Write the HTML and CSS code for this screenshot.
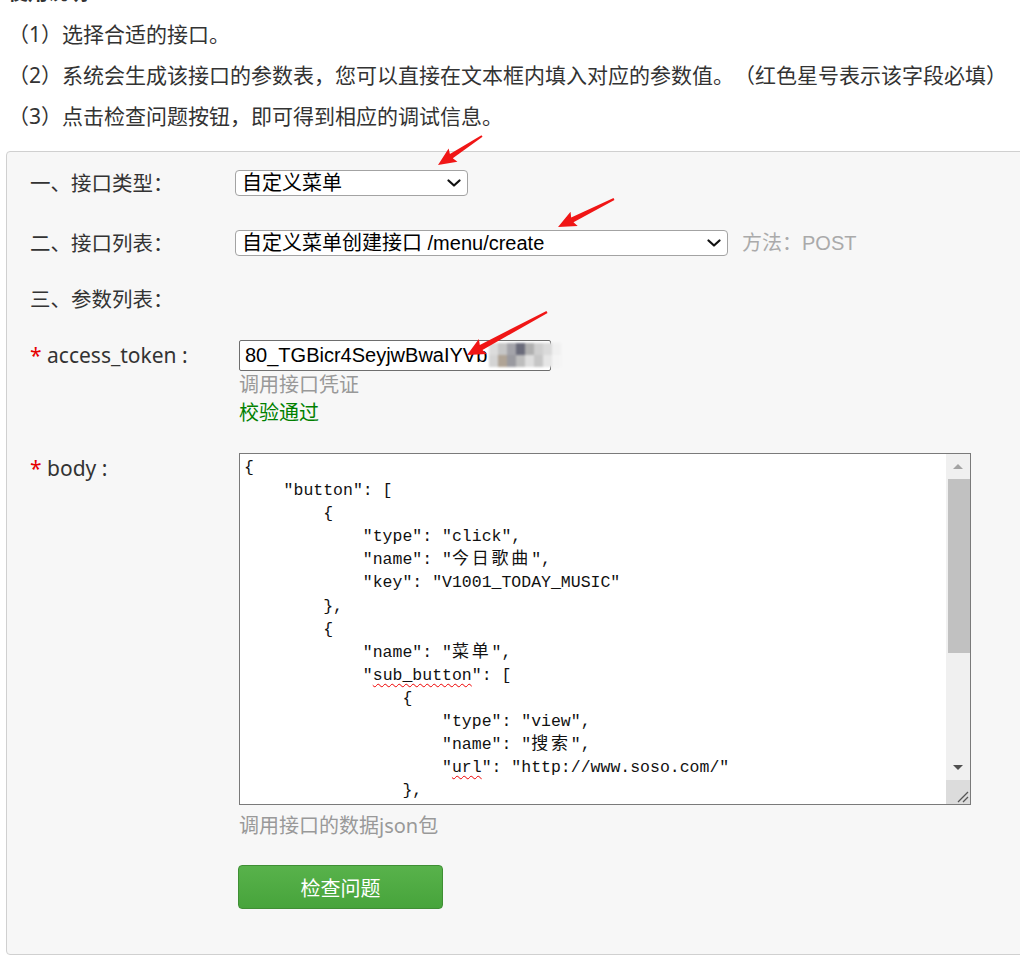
FILE: index.html
```html
<!DOCTYPE html>
<html lang="zh-CN">
<head>
<meta charset="utf-8">
<title>接口调试</title>
<link rel="stylesheet" href="styles.css">
</head>
<body>
<div class="page">
  <div class="intro">
    <h3 class="intro-title">使用说明</h3>
    <ol class="steps">
      <li>（1）选择合适的接口。</li>
      <li>（2）系统会生成该接口的参数表，您可以直接在文本框内填入对应的参数值。（红色星号表示该字段必填）</li>
      <li>（3）点击检查问题按钮，即可得到相应的调试信息。</li>
    </ol>
  </div>

  <div class="panel">
    <div class="row row-type">
      <div class="label">一、接口类型：</div>
      <div class="field">
        <div class="select select-type">
          <span>自定义菜单</span>
          <svg class="chev" width="14" height="8" viewBox="0 0 14 8"><path d="M1.5 1.5 L7 6.5 L12.5 1.5" fill="none" stroke="#111" stroke-width="2.2" stroke-linecap="round" stroke-linejoin="round"/></svg>
        </div>
      </div>
    </div>

    <div class="row row-list">
      <div class="label">二、接口列表：</div>
      <div class="field field-inline">
        <div class="select select-list">
          <span>自定义菜单创建接口 /menu/create</span>
          <svg class="chev" width="14" height="8" viewBox="0 0 14 8"><path d="M1.5 1.5 L7 6.5 L12.5 1.5" fill="none" stroke="#111" stroke-width="2.2" stroke-linecap="round" stroke-linejoin="round"/></svg>
        </div>
        <span class="method">方法：POST</span>
      </div>
    </div>

    <div class="row row-params">
      <div class="label">三、参数列表：</div>
      <div class="field"></div>
    </div>

    <div class="row row-token">
      <div class="label label-latin"><span class="req">*</span> access_token :</div>
      <div class="field">
        <div class="token-wrap">
          <input class="token-input" type="text" value="80_TGBicr4SeyjwBwaIYVb">
          <span class="mosaic" aria-hidden="true">
            <i class="m1"></i><i class="m2"></i><i class="m3"></i><i class="m4"></i><i class="m5"></i><i class="m6"></i><i class="m7"></i><i class="m8"></i>
            <i class="m9"></i><i class="m10"></i><i class="m11"></i><i class="m12"></i><i class="m13"></i><i class="m14"></i><i class="m15"></i><i class="m16"></i>
          </span>
        </div>
        <div class="hint">调用接口凭证</div>
        <div class="hint ok">校验通过</div>
      </div>
    </div>

    <div class="row row-body">
      <div class="label label-latin"><span class="req">*</span> body :</div>
      <div class="field">
        <div class="code-box">
<pre class="code">{
    "button": [
        {
            "type": "click",
            "name": "<span class="cjk">今日歌曲</span>",
            "key": "V1001_TODAY_MUSIC"
        },
        {
            "name": "<span class="cjk">菜单</span>",
            "<span class="spell">sub_button</span>": [
                {
                    "type": "view",
                    "name": "<span class="cjk">搜索</span>",
                    "<span class="spell">url</span>": "http://www.soso.com/"
                },</pre>
          <div class="scrollbar">
            <div class="sb-btn"><span class="tri-up"></span></div>
            <div class="sb-track"><div class="sb-thumb"></div></div>
            <div class="sb-btn"><span class="tri-down"></span></div>
            <div class="sb-corner">
              <svg width="24" height="24" viewBox="0 0 24 24"><path d="M12 22 L22 12 M17 22 L22 17" stroke="#555" stroke-width="1.3" fill="none"/></svg>
            </div>
          </div>
        </div>
        <div class="hint hint-body">调用接口的数据json包</div>
        <button class="check-btn" type="button">检查问题</button>
      </div>
    </div>
  </div>
</div>

<svg class="arrows" width="1020" height="975" viewBox="0 0 1020 975" aria-hidden="true">
  <g fill="#f01616">
    <polygon transform="translate(482 136) rotate(146.6)" points="0,-1 36.7,-2.6 34.7,-8 52.7,0 34.7,8 36.7,2.6 0,1"/>
    <polygon transform="translate(614 199) rotate(153.4)" points="0,-1 46.6,-2.6 44.6,-8 62.6,0 44.6,8 46.6,2.6 0,1"/>
    <polygon transform="translate(547 312) rotate(151.7)" points="0,-1.2 74.8,-2.8 72.8,-8.5 90.8,0 72.8,8.5 74.8,2.8 0,1.2"/>
  </g>
</svg>
</body>
</html>
```

FILE: styles.css
```css
* {
  box-sizing: border-box;
}

html,
body {
  margin: 0;
  padding: 0;
  overflow: hidden;
  background: #fff;
}

body {
  font-family: "Noto Sans", "Noto Sans CJK SC", sans-serif;
  font-size: 20px;
  color: #333;
  text-spacing-trim: space-all;
}

.page {
  display: flow-root;
}

.intro {
  padding: 0 8px;
}

.intro-title {
  margin: -21px 0 0;
  font-size: 20px;
  line-height: 28px;
  font-weight: bold;
  color: #333;
}

.steps {
  list-style: none;
  margin: 7px 0 0;
  padding: 0;
}

.steps li {
  font-size: 21px;
  line-height: 41px;
  white-space: nowrap;
}

.panel {
  margin: 14px 0 0 6px;
  width: 1040px;
  border: 1px solid #d0d0d0;
  border-radius: 4px;
  background: #f7f7f7;
  padding: 18px 0 45px 23px;
}

.row {
  display: grid;
  grid-template-columns: 205px 1fr;
}

.row-list {
  margin-top: 34px;
}

.row-params {
  margin-top: 30px;
}

.row-token {
  margin-top: 28px;
}

.row-body {
  margin-top: 26px;
}

.label {
  font-size: 20.5px;
  line-height: 26px;
  color: #333;
  white-space: nowrap;
}

.label-latin {
  font-size: 21px;
}

.row-token .label {
  line-height: 31px;
}

.row-body .label {
  line-height: 30px;
}

.req {
  color: #e60000;
}

.select {
  display: flex;
  align-items: center;
  justify-content: space-between;
  height: 26px;
  border: 1px solid #a3a3a3;
  border-radius: 4px;
  background: #fff;
  padding: 0 6px 0 6px;
  font-family: "Liberation Sans", "Noto Sans CJK SC", sans-serif;
  font-size: 20px;
  line-height: 24px;
  color: #000;
  white-space: nowrap;
}

.select-type {
  width: 233px;
}

.select-list {
  width: 493px;
}

.chev {
  flex: none;
}

.field-inline {
  display: flex;
  align-items: center;
  gap: 14px;
  height: 26px;
}

.method {
  font-family: "Liberation Sans", "Noto Sans CJK SC", sans-serif;
  line-height: 26px;
  color: #aaa;
  white-space: nowrap;
}

.token-wrap {
  position: relative;
  margin-left: 4px;
  width: 312px;
  height: 31px;
}

.token-input {
  display: block;
  width: 312px;
  height: 31px;
  margin: 0;
  border: 1px solid #6e6e6e;
  border-radius: 2px;
  padding: 0 5px;
  font-family: "Liberation Sans", sans-serif;
  font-size: 20px;
  color: #000;
  background: #fff;
}

.mosaic {
  position: absolute;
  left: 250px;
  top: 3px;
  display: grid;
  grid-template-columns: repeat(8, 9px);
  grid-auto-rows: 12px;
  filter: blur(1.2px);
}

.mosaic i {
  display: block;
}

.m1 { background: #dcdcdc; }
.m2 { background: #c6c6c6; }
.m3 { background: #a4a4aa; }
.m4 { background: #6a6b7a; }
.m5 { background: #b0b0b0; }
.m6 { background: #cfcfcf; }
.m7 { background: #dadada; }
.m8 { background: #f0f0f0; }
.m9 { background: #d4d4d4; }
.m10 { background: #b0a496; }
.m11 { background: #9a9aa0; }
.m12 { background: #bdbdbd; }
.m13 { background: #dedede; }
.m14 { background: #c6c6c6; }
.m15 { background: #e6e6e6; }
.m16 { background: #f4f4f4; }

.hint {
  margin-left: 4px;
  line-height: 28px;
  color: #999;
  white-space: nowrap;
}

.hint.ok {
  color: #008000;
}

.hint-body {
  margin-top: 7px;
}

.code-box {
  display: flex;
  margin-left: 4px;
  width: 732px;
  height: 352px;
  border: 1px solid #7a7a7a;
  background: #fff;
}

.code {
  flex: 1;
  margin: 0;
  padding: 2px 4px;
  overflow: hidden;
  font-family: "Liberation Mono", monospace;
  font-size: 16.5px;
  line-height: 23.1px;
  color: #111;
  white-space: pre;
}

.cjk {
  font-family: "Noto Sans CJK SC", sans-serif;
  font-size: 17px;
  line-height: 0;
  letter-spacing: 2.8px;
}

.spell {
  text-decoration: underline wavy #e00;
  text-decoration-thickness: 1px;
  text-underline-offset: 3px;
}

.scrollbar {
  flex: none;
  width: 24px;
  display: flex;
  flex-direction: column;
  background: #f0f0f0;
}

.sb-btn {
  height: 25px;
  display: flex;
  align-items: center;
  justify-content: center;
}

.tri-up {
  width: 0;
  height: 0;
  border-left: 5px solid transparent;
  border-right: 5px solid transparent;
  border-bottom: 5px solid #a3a3a3;
}

.tri-down {
  width: 0;
  height: 0;
  border-left: 5px solid transparent;
  border-right: 5px solid transparent;
  border-top: 5px solid #505050;
}

.sb-track {
  flex: 1;
  padding-left: 2px;
}

.sb-thumb {
  height: 174px;
  background: #c1c1c1;
}

.sb-corner {
  height: 24px;
  background: #dcdcdc;
}

.sb-corner svg {
  display: block;
}

.check-btn {
  display: block;
  margin: 25px 0 0 3px;
  width: 205px;
  height: 44px;
  border: 1px solid #3f8f34;
  border-radius: 4px;
  background: linear-gradient(#58b24b, #47a43b);
  color: #fff;
  font-family: "Noto Sans CJK SC", sans-serif;
  font-size: 20px;
  cursor: pointer;
}

.arrows {
  position: absolute;
  left: 0;
  top: 0;
  pointer-events: none;
}
```
